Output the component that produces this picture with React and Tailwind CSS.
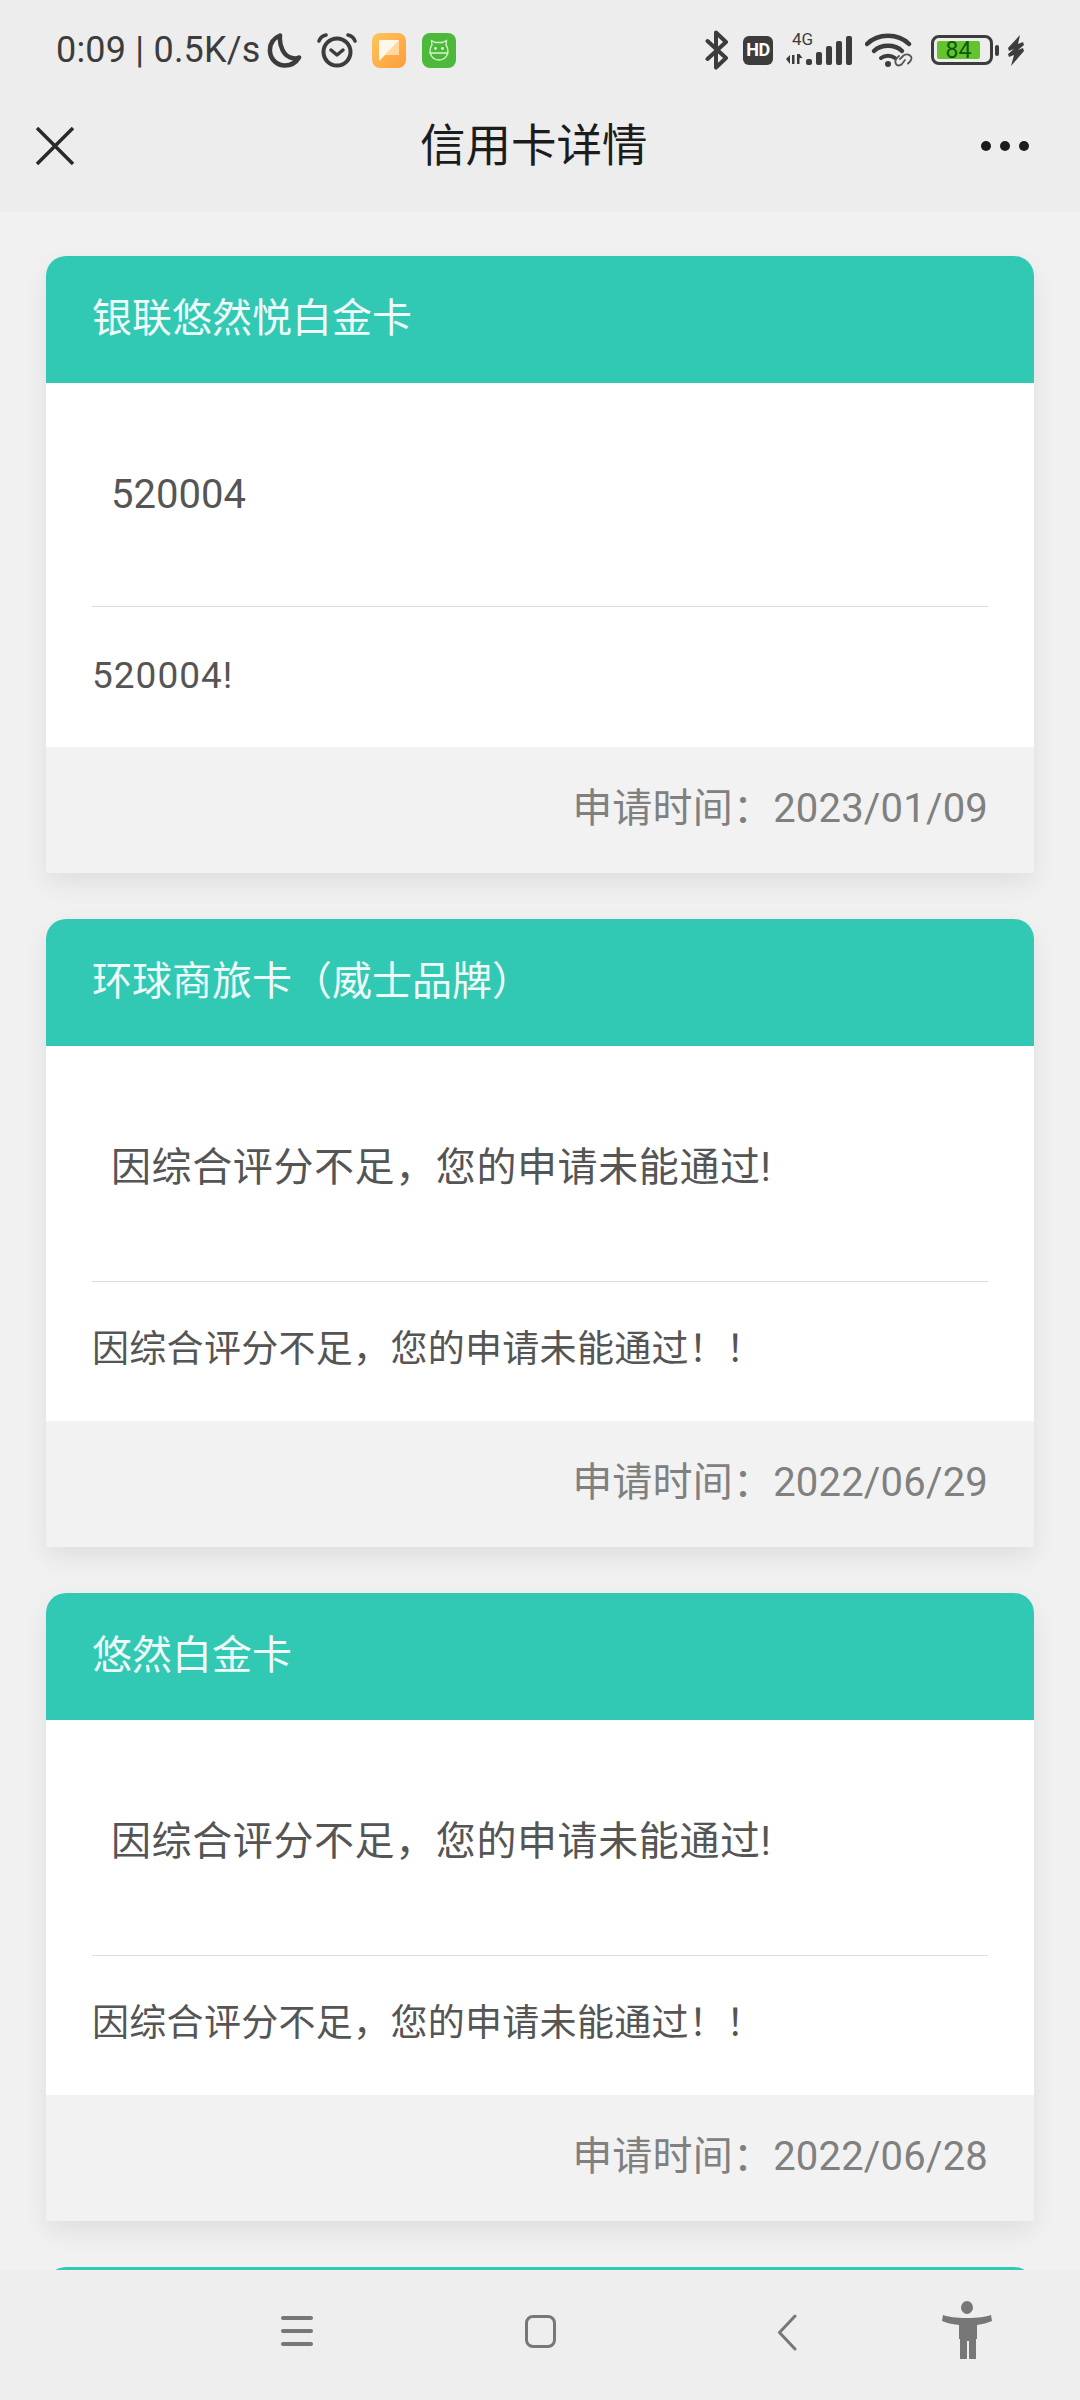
const cards = [
  { title: '银联悠然悦白金卡', main: '520004', sub: '520004!', date: '2023/01/09', latin: true },
  { title: '环球商旅卡（威士品牌）', main: '因综合评分不足，您的申请未能通过!', sub: '因综合评分不足，您的申请未能通过！！', date: '2022/06/29' },
  { title: '悠然白金卡', main: '因综合评分不足，您的申请未能通过!', sub: '因综合评分不足，您的申请未能通过！！', date: '2022/06/28' },
];

function StatusBar() {
  return (
    <div className="h-[100px] flex items-center pl-[56px] pr-[55px] text-[#3c3c3c]">
      <span className="text-[36px] leading-none tracking-[0.2px] w-[211px] whitespace-nowrap">0:09 | 0.5K/s</span>
      {/* moon */}
      <svg className="w-[36px] h-[37px]" viewBox="0 0 36 36" fill="none" stroke="#3c3c3c" strokeWidth="4.500" strokeLinecap="round" strokeLinejoin="round">
        <path d="M13 3C6 6 2.500 12 3 19c.6 8 7 14 15 14 6.500 0 11-3 14-8-2 1-5 1-7 .5C17 24 12 14 13 3z" />
      </svg>
      {/* alarm */}
      <svg className="w-[40px] h-[36px] ml-[14px]" viewBox="0 0 40 36" fill="none" stroke="#3c3c3c" strokeLinecap="round" strokeLinejoin="round">
        <circle cx="20" cy="20" r="13.500" strokeWidth="4" />
        <path d="M14 18l6 5 6-5" strokeWidth="3.500" />
        <path d="M2 9c1-3 3-5 7-6M38 9c-1-3-3-5-7-6" strokeWidth="3.500" />
      </svg>
      {/* notes app */}
      <div className="w-[34px] h-[35px] ml-[15px] rounded-[8px] bg-gradient-to-br from-[#fdc55e] to-[#fd9c38] flex items-center justify-center">
        <svg className="w-[20px] h-[21px]" viewBox="0 0 20 21">
          <path d="M0 0h20v15H6l-6 6z" fill="#ffd9a0" />
          <path d="M0 0h20L0 21z" fill="#fff7ea" />
        </svg>
      </div>
      {/* green app */}
      <div className="w-[34px] h-[35px] ml-[16px] rounded-[8px] bg-[#4db93a] flex items-center justify-center">
        <svg className="w-[24px] h-[22px]" viewBox="0 0 24 22" fill="none" stroke="#d9f3cf" strokeWidth="1.300" strokeLinecap="round">
          <path d="M5 6L4.500 1.500 8.500 3.500h7l4-2L19 6c2.500 3 2.500 8 .5 11-2 3-4.500 4-7.500 4s-5.500-1-7.500-4C2.500 14 2.500 9 5 6z" />
          <path d="M3 14h18" />
          <circle cx="8.500" cy="9.500" r=".8" fill="#d9f3cf" />
          <circle cx="15.500" cy="9.500" r=".8" fill="#d9f3cf" />
        </svg>
      </div>
      <div className="flex-1" />
      {/* bluetooth */}
      <svg className="w-[24px] h-[40px]" viewBox="0 0 24 40" fill="none" stroke="#3c3c3c" strokeWidth="4" strokeLinecap="round" strokeLinejoin="round">
        <path d="M2.500 11L21 28 11 37.500V2.500L21 12 2.500 29" />
      </svg>
      {/* HD */}
      <div className="w-[30px] h-[29px] ml-[14px] rounded-[6px] bg-[#3c3c3c] flex items-center justify-center text-white text-[18px] leading-none font-bold tracking-[-0.5px]">HD</div>
      {/* 4G signal */}
      <div className="relative w-[67px] h-[36px] ml-[12px]">
        <span className="absolute left-[7px] top-[-2px] text-[17px] leading-[18px] text-[#3c3c3c]">4G</span>
        <svg className="w-[67px] h-[36px]" viewBox="0 0 67 36" fill="#3c3c3c">
          <path d="M1 27l4-4v9zM7 23h2.500v9H7zM12 22h2.500v10H12zM14.500 22l3 4h-3z" />
          <rect x="21" y="27" width="6" height="6" rx="2" />
          <rect x="31" y="20" width="6" height="13" rx="2" />
          <rect x="41" y="14" width="6" height="19" rx="2" />
          <rect x="51" y="9" width="6" height="24" rx="2" />
          <rect x="61" y="4" width="6" height="29" rx="2" />
        </svg>
      </div>
      {/* wifi with link */}
      <svg className="w-[50px] h-[36px] ml-[13px]" viewBox="0 0 50 36" fill="none" stroke="#3c3c3c" strokeLinecap="round">
        <path d="M2 12C13 1 33 1 44 12" strokeWidth="4.500" />
        <path d="M9 19c7-7 21-7 28 0" strokeWidth="4.500" />
        <path d="M16 26c4-3 10-3 14 0" strokeWidth="4" />
        <circle cx="23" cy="32" r="3" fill="#3c3c3c" stroke="none" />
        <path d="M35 27l3-3c2-2 5-2 7-.5s2 4 0 6l-2 2M40 28l-3 4c-2 2-5 2-6 0s-1-4 1-6l2-2" strokeWidth="1.800" stroke="#555" />
      </svg>
      {/* battery */}
      <div className="w-[62px] h-[30px] ml-[16px] rounded-[8px] border-[3px] border-[#3c3c3c] p-[3px] flex">
        <div className="w-[43px] h-full rounded-[2px] bg-[#63c42e] flex items-center justify-center text-[#0e5a0c] text-[23px] leading-none">84</div>
      </div>
      <div className="w-[4px] h-[11px] ml-[2px] rounded-[2px] bg-[#3c3c3c]" />
      {/* charging bolt */}
      <svg className="w-[18px] h-[31px] ml-[8px]" viewBox="0 0 18 31" fill="#3c3c3c">
        <path d="M13 0L1 13l1 3 5-2-6 5 1 3 5-2-3 11 13-15-1-3-5 2 6-5-1-3-5 2z" />
      </svg>
    </div>
  );
}

function TitleBar() {
  return (
    <div className="h-[112px] flex items-center justify-between pl-[36px] pr-[51px] pb-[20px] relative">
      <svg className="w-[38px] h-[38px]" viewBox="0 0 38 38" stroke="#2a2a2a" strokeWidth="3.500">
        <path d="M1 1l36 36M37 1L1 37" />
      </svg>
      <div className="absolute left-[420px] top-[15px] text-[45.500px] leading-[64px] text-[#1c1c1c] whitespace-nowrap">信用卡详情</div>
      <div className="flex gap-[9px]">
        <div className="w-[10px] h-[10px] rounded-full bg-[#1c1c1c]" />
        <div className="w-[10px] h-[10px] rounded-full bg-[#1c1c1c]" />
        <div className="w-[10px] h-[10px] rounded-full bg-[#1c1c1c]" />
      </div>
    </div>
  );
}

function Card({ card }) {
  return (
    <div className="rounded-t-[20px] overflow-hidden bg-white shadow-[0_10px_26px_rgba(0,0,0,0.08)] mb-[46px]">
      <div className="h-[127px] bg-[#31c8b4] flex items-center pl-[46px] pb-[2px] text-[40px] text-[#eefaf7]">{card.title}</div>
      {card.latin ? (
        <div className="h-[223px] flex items-center pl-[65px] text-[40px] text-[#555555]">{card.main}</div>
      ) : (
        <div className="h-[235px] flex items-center pl-[65px] pt-[8px] text-[40px] tracking-[0.6px] text-[#555555]">{card.main}</div>
      )}
      <div className="mx-[46px] h-[1px] bg-[#dddddd]" />
      {card.latin ? (
        <div className="h-[140px] flex items-center pl-[46px] pb-[3px] text-[37px] tracking-[1px] text-[#555555]">{card.sub}</div>
      ) : (
        <div className="h-[139px] flex items-center pl-[46px] pb-[3px] text-[37px] tracking-[0.3px] text-[#555555]">{card.sub}</div>
      )}
      <div className="h-[126px] bg-[#f2f2f2] flex items-center justify-end pr-[46px] pb-[2px] text-[40px] tracking-[0.2px] text-[#808080]">
        申请时间：{card.date}
      </div>
    </div>
  );
}

function NavBar() {
  return (
    <div className="h-[130px] shrink-0 bg-[#eeeeee] flex items-start">
      <div className="ml-[281px] mt-[46px] flex flex-col gap-[9px] w-[32px]">
        <div className="h-[4px] rounded-full bg-[#777777]" />
        <div className="h-[4px] rounded-full bg-[#777777]" />
        <div className="h-[4px] rounded-full bg-[#777777]" />
      </div>
      <div className="ml-[212px] mt-[45px] w-[31px] h-[33px] rounded-[8px] border-[3px] border-[#777777]" />
      <svg className="ml-[220px] mt-[44px] w-[22px] h-[37px]" viewBox="0 0 22 37" fill="none" stroke="#777777" strokeWidth="3" strokeLinecap="round" strokeLinejoin="round">
        <path d="M19 2L3.500 18.500 19 35" />
      </svg>
      <svg className="ml-[144px] mt-[31px] w-[50px] h-[58px]" viewBox="0 0 50 58" fill="#777777">
        <ellipse cx="25" cy="6.500" rx="6" ry="6.500" />
        <path d="M1 14c6 2 12 3 24 3s18-1 24-3l1 6c-4 2-10 3-15 4v14h-1v20h-7V40h-2v18h-7V38h-1V24C10 23 4 22 0 20z" />
      </svg>
    </div>
  );
}

export default function App() {
  return (
    <div className="w-[1080px] h-[2400px] flex flex-col overflow-hidden bg-[#f1f1f1] font-['Roboto','Noto_Sans_CJK_SC',sans-serif]">
      <div className="h-[212px] shrink-0 bg-[#ededed]">
        <StatusBar />
        <TitleBar />
      </div>
      <div className="flex-1 min-h-0 overflow-hidden px-[46px] pt-[44px]">
        {cards.map((c) => <Card key={c.date} card={c} />)}
        <div className="mt-[1px] h-[126px] rounded-t-[20px] bg-[#31c8b4]" />
      </div>
      <NavBar />
    </div>
  );
}
